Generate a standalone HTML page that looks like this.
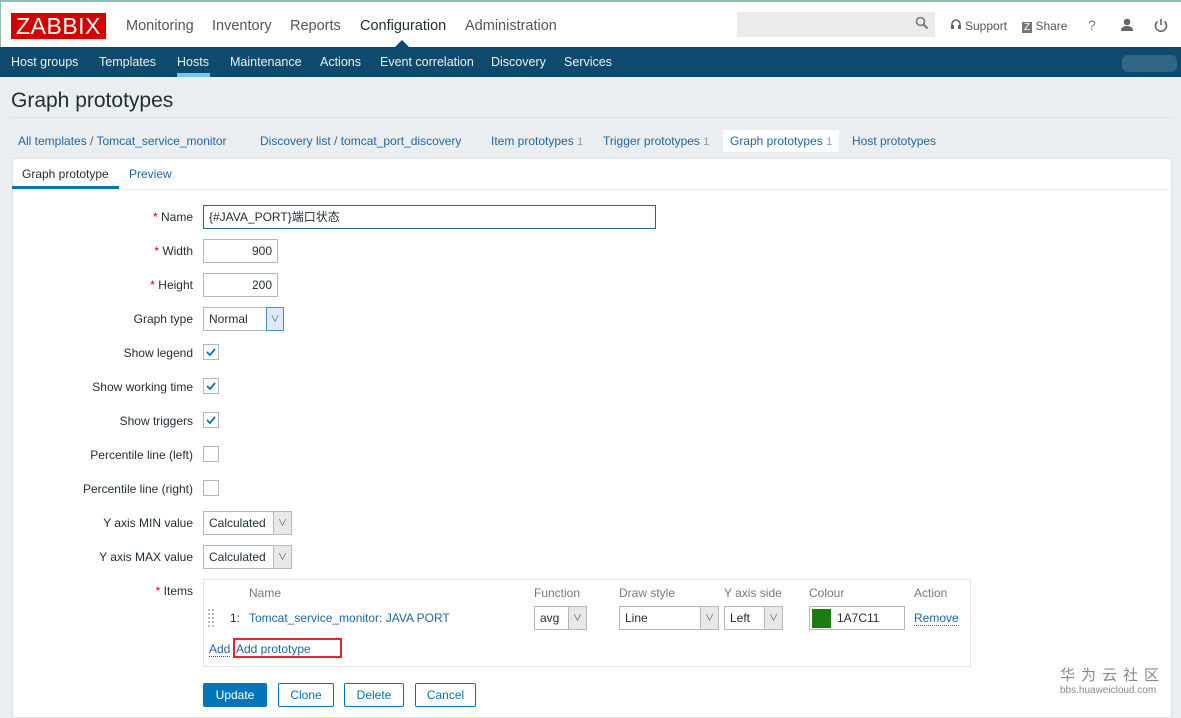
<!DOCTYPE html>
<html><head><meta charset="utf-8"><style>
*{box-sizing:border-box;margin:0;padding:0}
body{width:1181px;height:705px;overflow:hidden;background:#ebeef0;font-family:"Liberation Sans","Noto Sans CJK SC",sans-serif;font-size:12px;color:#1f2c33;position:relative}
.abs{position:absolute}
.top{position:absolute;left:0;top:0;width:1181px;height:47px;background:#fff;border-top:2px solid #8fbcb0}
.logo{position:absolute;left:11px;top:11px;width:95px;height:26px;background:#d40000;color:#fff;font-size:23px;line-height:26px;text-align:center;letter-spacing:0.5px}
.mm{position:absolute;top:16px;font-size:14.5px;color:#555}
.nav{position:absolute;left:0;top:47px;width:1181px;height:30px;background:#0e4a6e}
.nav span{position:absolute;top:8px;color:#fff;font-size:12.5px;opacity:.92}
.lbl{position:absolute;right:988px;font-size:12px;color:#1f2c33;white-space:nowrap}
.lbl b{color:#d40000;font-weight:normal}
.inp{position:absolute;left:203px;height:24px;border:1px solid #acbbc2;background:#fff;font-size:12px;line-height:22px;padding:0 5px}
.cb{position:absolute;left:203px;width:16px;height:16px;border:1px solid #acbbc2;background:#fff}
.sel{position:absolute;height:24px;border:1px solid #acbbc2;background:#fff;font-size:12px;line-height:22px;padding-left:5px}
.sel i{position:absolute;right:0;top:0;width:18px;height:22px;border-left:1px solid #acbbc2;background:#e8e8e8;font-style:normal;text-align:center;font-size:9px;color:#555}
.lnk{color:#1f65a3}
.btn{position:absolute;top:683px;height:24px;border:1px solid #0275b8;color:#0275b8;background:#fff;font-size:12px;text-align:center;line-height:22px;border-radius:2px}
</style></head><body>
<div class="top">
<div class="logo">ZABBIX</div>
<span class="mm" style="left:126px">Monitoring</span>
<span class="mm" style="left:212px">Inventory</span>
<span class="mm" style="left:290px">Reports</span>
<span class="mm" style="left:360px;color:#1f2c33">Configuration</span>
<span class="mm" style="left:465px">Administration</span>
<div class="abs" style="left:737px;top:10px;width:198px;height:25px;background:#ebebeb"></div>
<svg class="abs" style="left:915px;top:14px" width="14" height="14"><circle cx="5.5" cy="5.5" r="4" stroke="#777" stroke-width="1.6" fill="none"/><line x1="8.5" y1="8.5" x2="12.5" y2="12.5" stroke="#777" stroke-width="2"/></svg>
<svg class="abs" style="left:950px;top:16px" width="12" height="12"><path d="M2 8 V6 A4 4 0 0 1 10 6 V8" stroke="#666" stroke-width="1.5" fill="none"/><rect x="1" y="7" width="3" height="4" fill="#666"/><rect x="8" y="7" width="3" height="4" fill="#666"/></svg>
<span class="abs" style="left:965px;top:17px;color:#555;font-size:12px">Support</span>
<span class="abs" style="left:1022px;top:17px;color:#555;font-size:12px"><span style="background:#777;color:#fff;font-size:10px;padding:0 2px">Z</span> Share</span>
<span class="abs" style="left:1088px;top:15px;color:#777;font-size:14px">?</span>
<svg class="abs" style="left:1120px;top:16px" width="14" height="14"><circle cx="7" cy="4" r="3.3" fill="#666"/><path d="M1 13 Q1 8 7 8 Q13 8 13 13Z" fill="#666"/></svg>
<svg class="abs" style="left:1154px;top:16px" width="14" height="14"><path d="M3.5 3.5 A5.5 5.5 0 1 0 10.5 3.5" stroke="#666" stroke-width="1.6" fill="none"/><line x1="7" y1="1" x2="7" y2="7" stroke="#666" stroke-width="1.6"/></svg>
<div class="abs" style="left:0;top:0;width:1px;height:47px;background:#8fbcb0"></div>
</div>
<div class="abs" style="left:395px;top:40px;width:0;height:0;border-left:7px solid transparent;border-right:7px solid transparent;border-bottom:7px solid #0e4a6e"></div>
<div class="nav">
<span style="left:11px">Host groups</span><span style="left:99px">Templates</span><span style="left:177px">Hosts</span><span style="left:230px">Maintenance</span><span style="left:320px">Actions</span><span style="left:380px">Event correlation</span><span style="left:491px">Discovery</span><span style="left:564px">Services</span>
<div class="abs" style="left:177px;top:26px;width:33px;height:4px;background:#7cc2e9"></div>
<div class="abs" style="left:1122px;top:8px;width:55px;height:17px;background:#4a7893;border-radius:6px;opacity:.6"></div>
</div>
<div class="abs" style="left:11px;top:89px;font-size:21px;color:#1f2c33">Graph prototypes</div>
<div class="abs" style="left:10px;top:117px;width:1162px;height:1px;background:#dde1e3"></div>
<div class="abs" style="left:723px;top:130px;width:116px;height:22px;background:#fff"></div>
<div class="abs lnk" style="left:18px;top:134px;font-size:12px;white-space:nowrap">All templates <span style="color:#555">/</span> Tomcat_service_monitor</div>
<div class="abs lnk" style="left:260px;top:134px;white-space:nowrap">Discovery list <span style="color:#555">/</span> tomcat_port_discovery</div>
<div class="abs lnk" style="left:491px;top:134px;white-space:nowrap">Item prototypes <span style="color:#999;font-size:11px">1</span></div>
<div class="abs lnk" style="left:603px;top:134px;white-space:nowrap">Trigger prototypes <span style="color:#999;font-size:11px">1</span></div>
<div class="abs lnk" style="left:730px;top:134px;white-space:nowrap">Graph prototypes <span style="color:#999;font-size:11px">1</span></div>
<div class="abs lnk" style="left:852px;top:134px">Host prototypes</div>
<div class="abs" style="left:12px;top:158px;width:1160px;height:560px;background:#fff;border:1px solid #dde1e3"></div>
<div class="abs" style="left:12px;top:189px;width:1160px;height:1px;background:#ebeef0"></div>
<div class="abs" style="left:22px;top:167px">Graph prototype</div>
<div class="abs" style="left:12px;top:186px;width:107px;height:3px;background:#0275b8"></div>
<div class="abs lnk" style="left:129px;top:167px">Preview</div>

<div class="lbl" style="top:210px"><b>*</b> Name</div>
<div class="inp" style="top:205px;width:453px;border-color:#1f6b8f">{#JAVA_PORT}端口状态</div>
<div class="lbl" style="top:244px"><b>*</b> Width</div>
<div class="inp" style="top:239px;width:75px;text-align:right">900</div>
<div class="lbl" style="top:278px"><b>*</b> Height</div>
<div class="inp" style="top:273px;width:75px;text-align:right">200</div>
<div class="lbl" style="top:312px">Graph type</div>
<div class="sel" style="left:203px;top:307px;width:81px">Normal<i style="border:1px solid #4a8ec0;background:#dcebf7;top:-1px;right:-1px;height:24px">&#8744;</i></div>
<div class="lbl" style="top:346px">Show legend</div><div class="cb" style="top:344px"><svg width="14" height="14"><path d="M3 7 L6 10 L11 4" stroke="#0275b8" stroke-width="1.8" fill="none"/></svg></div>
<div class="lbl" style="top:380px">Show working time</div><div class="cb" style="top:378px"><svg width="14" height="14"><path d="M3 7 L6 10 L11 4" stroke="#0275b8" stroke-width="1.8" fill="none"/></svg></div>
<div class="lbl" style="top:414px">Show triggers</div><div class="cb" style="top:412px"><svg width="14" height="14"><path d="M3 7 L6 10 L11 4" stroke="#0275b8" stroke-width="1.8" fill="none"/></svg></div>
<div class="lbl" style="top:448px">Percentile line (left)</div><div class="cb" style="top:446px"></div>
<div class="lbl" style="top:482px">Percentile line (right)</div><div class="cb" style="top:480px"></div>
<div class="lbl" style="top:516px">Y axis MIN value</div>
<div class="sel" style="left:203px;top:511px;width:89px">Calculated<i>&#8744;</i></div>
<div class="lbl" style="top:550px">Y axis MAX value</div>
<div class="sel" style="left:203px;top:545px;width:89px">Calculated<i>&#8744;</i></div>
<div class="lbl" style="top:584px"><b>*</b> Items</div>

<div class="abs" style="left:203px;top:579px;width:768px;height:88px;border:1px solid #e2e6e8"></div>
<div class="abs" style="left:249px;top:586px;color:#777">Name</div>
<div class="abs" style="left:534px;top:586px;color:#777">Function</div>
<div class="abs" style="left:619px;top:586px;color:#777">Draw style</div>
<div class="abs" style="left:724px;top:586px;color:#777">Y axis side</div>
<div class="abs" style="left:809px;top:586px;color:#777">Colour</div>
<div class="abs" style="left:914px;top:586px;color:#777">Action</div>
<div class="abs" style="left:208px;top:609px;width:6px;height:18px;border-left:2px dotted #bbb;border-right:2px dotted #bbb"></div>
<div class="abs" style="left:230px;top:611px">1:</div>
<div class="abs lnk" style="left:249px;top:611px">Tomcat_service_monitor: JAVA PORT</div>
<div class="sel" style="left:534px;top:606px;width:53px">avg<i>&#8744;</i></div>
<div class="sel" style="left:619px;top:606px;width:100px">Line<i>&#8744;</i></div>
<div class="sel" style="left:724px;top:606px;width:59px">Left<i>&#8744;</i></div>
<div class="inp" style="left:809px;top:606px;width:96px;padding-left:27px">1A7C11</div>
<div class="abs" style="left:812px;top:609px;width:19px;height:19px;background:#1a7c11"></div>
<div class="abs lnk" style="left:914px;top:611px;border-bottom:1px dotted #1f65a3">Remove</div>
<div class="abs lnk" style="left:209px;top:642px;border-bottom:1px dotted #1f65a3">Add</div>
<div class="abs lnk" style="left:236px;top:642px">Add prototype</div>
<div class="abs" style="left:233px;top:638px;width:109px;height:20px;border:2px solid #e0282e"></div>

<div class="btn" style="left:203px;width:64px;background:#0275b8;color:#fff">Update</div>
<div class="btn" style="left:278px;width:56px">Clone</div>
<div class="btn" style="left:344px;width:60px">Delete</div>
<div class="btn" style="left:415px;width:61px">Cancel</div>

<div class="abs" style="left:1060px;top:664px;font-size:15px;color:#888;letter-spacing:6px">华为云社区</div>
<div class="abs" style="left:1060px;top:685px;font-size:10px;color:#888">bbs.huaweicloud.com</div>
</body></html>
